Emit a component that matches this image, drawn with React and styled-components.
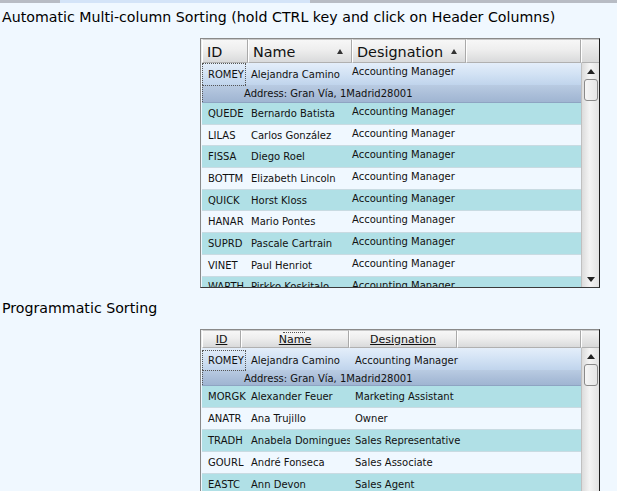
import React from "react";
import styled, { createGlobalStyle, css } from "styled-components";

const GlobalStyle = createGlobalStyle`
  body {
    margin: 0;
    background: #f0f8ff;
    font-family: "DejaVu Sans", Tahoma, sans-serif;
  }
`;

const TopStrip = styled.div`
  height: 3px;
  background: linear-gradient(
    to right,
    #b8bcc4 0,
    #b8bcc4 60px,
    #d4e4f8 60px,
    #d4e4f8 310px,
    #b8bcc4 310px
  );
`;

const Label = styled.div`
  font-size: 14.2px;
  line-height: 20px;
  color: #000;
  padding-left: 2px;
  margin-top: ${({ $top }) => $top}px;
  margin-bottom: ${({ $bottom }) => $bottom}px;
  white-space: nowrap;
`;

const GridBox = styled.div`
  margin-left: 200px;
  width: 398px;
  height: ${({ $height }) => $height}px;
  border: 1px solid #8a8a8a;
  border-right-color: #1e1e1e;
  border-bottom-color: #3a3a3a;
  background: #f0f8ff;
  display: grid;
  grid-template-columns: 1fr 18px;
  grid-template-rows: ${({ $header }) => $header}px 1fr;
  overflow: hidden;
`;

const HeaderRow = styled.div`
  display: grid;
  grid-template-columns: ${({ $cols }) => $cols};
  padding-left: 1px;
  background: #eceeef;
`;

const HeaderCell = styled.div`
  display: flex;
  align-items: center;
  justify-content: ${({ $center }) => ($center ? "center" : "space-between")};
  padding: ${({ $center }) => ($center ? "1px 0 0" : "2px 8px 0 4px")};
  background: linear-gradient(to bottom, #f7f7f7 0%, #eeeeee 45%, #d9dadb 100%);
  border-right: 1px solid #a9a9a9;
  border-left: 1px solid #ffffff;
  border-top: 1px solid #c8c8c8;
  border-bottom: 1px solid #b0b0b0;
  font-size: ${({ $large }) => ($large ? "14.4px" : "11px")};
  text-decoration: ${({ $underline }) => ($underline ? "underline" : "none")};
  color: #111;
  white-space: nowrap;
  position: relative;
`;

const FocusMark = styled.span`
  position: absolute;
  top: 1px;
  left: 50%;
  width: 22px;
  margin-left: -12px;
  border-top: 1px dotted #555;
`;

const SortArrow = styled.span`
  width: 0;
  height: 0;
  border-left: 3.5px solid transparent;
  border-right: 3.5px solid transparent;
  border-bottom: 5px solid #333;
  margin-bottom: 2px;
`;

const Corner = styled.div`
  background: linear-gradient(to bottom, #f3f3f3, #d9d9d9);
  border-top: 1px solid #c8c8c8;
  border-bottom: 1px solid #b0b0b0;
  border-left: 1px solid #fff;
`;

const Body = styled.div`
  overflow: hidden;
  padding-left: 1px;
`;

const Row = styled.div`
  display: grid;
  grid-template-columns: 44px 104px 1fr;
  height: ${({ $h }) => $h}px;
  box-sizing: border-box;
  align-items: center;
  padding-top: ${({ $shift }) => $shift || 0}px;
  border-bottom: 1px solid #c9dbe2;
  font-size: 10px;
  color: #111;
  ${({ $variant }) =>
    $variant === "alt"
      ? css`
          background: #b0e0e6;
        `
      : $variant === "selected"
      ? css`
          background: linear-gradient(to bottom, #e4eefa 0%, #d2e2f4 50%, #c0d4ec 100%);
          border-bottom: none;
        `
      : css`
          background: #f0f8ff;
        `}
`;

const Cell = styled.div`
  padding-left: ${({ $pad }) => $pad ?? 6}px;
  white-space: nowrap;
  overflow: hidden;
  align-self: ${({ $top }) => ($top ? "start" : "center")};
  padding-top: ${({ $top }) => ($top ? "3px" : "0")};
  ${({ $focus }) =>
    $focus &&
    css`
      align-self: stretch;
      display: flex;
      align-items: center;
      border: 1px dotted #555;
      border-bottom: none;
      padding-left: 5px;
    `}
`;

const AddressRow = styled.div`
  height: ${({ $height }) => $height}px;
  display: flex;
  align-items: center;
  padding-left: 42px;
  padding-top: ${({ $shift }) => $shift || 0}px;
  font-size: 10px;
  color: #111;
  background: linear-gradient(to bottom, #b9cbe2 0%, #a9bdd8 60%, #a0b5d2 100%);
  border-bottom: 1px solid #8ea4c2;
  box-sizing: border-box;
  position: relative;
`;

const AddressFocus = styled.span`
  position: absolute;
  left: 0;
  top: 0;
  bottom: 0;
  width: 44px;
  border-left: 1px dotted #555;
  border-top: 1px dotted #555;
  box-sizing: border-box;
`;

const ScrollBar = styled.div`
  display: flex;
  flex-direction: column;
  align-items: center;
  background: linear-gradient(to right, #dcdcdc, #f4f4f4 45%, #e2e2e2);
  border-left: 1px solid #c0c0c0;
`;

const ArrowBtn = styled.div`
  height: 16px;
  width: 100%;
  display: flex;
  align-items: center;
  justify-content: center;
`;

const ArrowUp = styled.span`
  border-left: 4px solid transparent;
  border-right: 4px solid transparent;
  border-bottom: 5px solid #222;
`;

const ArrowDown = styled.span`
  border-left: 4px solid transparent;
  border-right: 4px solid transparent;
  border-top: 5px solid #222;
`;

const Thumb = styled.div`
  width: 12px;
  height: 20px;
  border: 1px solid #8a8a8a;
  border-radius: 3px;
  background: linear-gradient(to right, #f6f6f6, #e6e6e6);
`;

const Spacer = styled.div`
  flex: 1;
`;

const autoRows = [
  ["QUEDE", "Bernardo Batista", "Accounting Manager"],
  ["LILAS", "Carlos González", "Accounting Manager"],
  ["FISSA", "Diego Roel", "Accounting Manager"],
  ["BOTTM", "Elizabeth Lincoln", "Accounting Manager"],
  ["QUICK", "Horst Kloss", "Accounting Manager"],
  ["HANAR", "Mario Pontes", "Accounting Manager"],
  ["SUPRD", "Pascale Cartrain", "Accounting Manager"],
  ["VINET", "Paul Henriot", "Accounting Manager"],
  ["WARTH", "Pirkko Koskitalo", "Accounting Manager"],
];

const progRows = [
  ["MORGK", "Alexander Feuer", "Marketing Assistant"],
  ["ANATR", "Ana Trujillo", "Owner"],
  ["TRADH", "Anabela Domingues", "Sales Representative"],
  ["GOURL", "André Fonseca", "Sales Associate"],
  ["EASTC", "Ann Devon", "Sales Agent"],
  ["FAMIA", "Aria Cruz", "Marketing Assistant"],
];

function Grid({ large, height, header, addressHeight, rowHeight, rows, topDesig, desigPad, shift }) {
  return (
    <GridBox $height={height} $header={header}>
      {large ? (
        <HeaderRow $cols="46px 104px 114px 1fr">
          <HeaderCell $large>ID</HeaderCell>
          <HeaderCell $large>
            Name <SortArrow />
          </HeaderCell>
          <HeaderCell $large>
            Designation <SortArrow />
          </HeaderCell>
          <HeaderCell />
        </HeaderRow>
      ) : (
        <HeaderRow $cols="39px 108px 108px 1fr">
          <HeaderCell $center $underline>ID</HeaderCell>
          <HeaderCell $center $underline>
            <FocusMark />
            Name
          </HeaderCell>
          <HeaderCell $center $underline>Designation</HeaderCell>
          <HeaderCell $center />
        </HeaderRow>
      )}
      <Corner />
      <Body>
        <Row $variant="selected" $h={22} $shift={shift}>
          <Cell $focus>ROMEY</Cell>
          <Cell $pad={5}>Alejandra Camino</Cell>
          <Cell $pad={desigPad} $top={topDesig}>Accounting Manager</Cell>
        </Row>
        <AddressRow $height={addressHeight} $shift={shift}>
          <AddressFocus />
          Address: Gran Vía, 1Madrid28001
        </AddressRow>
        {rows.map(([id, name, desig], i) => (
          <Row key={id} $h={rowHeight} $variant={i % 2 === 0 ? "alt" : "plain"}>
            <Cell>{id}</Cell>
            <Cell $pad={5}>{name}</Cell>
            <Cell $pad={desigPad} $top={topDesig}>{desig}</Cell>
          </Row>
        ))}
      </Body>
      <ScrollBar>
        <ArrowBtn>
          <ArrowUp />
        </ArrowBtn>
        <Thumb />
        <Spacer />
        <ArrowBtn>
          <ArrowDown />
        </ArrowBtn>
      </ScrollBar>
    </GridBox>
  );
}

export default function App() {
  return (
    <>
      <GlobalStyle />
      <TopStrip />
      <Label $top={4} $bottom={11}>
        Automatic Multi-column Sorting (hold CTRL key and click on Header Columns)
      </Label>
      <Grid
        large
        height={248}
        header={24}
        addressHeight={18}
        rowHeight={21.7}
        rows={autoRows}
        topDesig
        desigPad={2}
      />
      <Label $top={10} $bottom={11}>Programmatic Sorting</Label>
      <Grid
        height={200}
        header={18}
        addressHeight={16}
        rowHeight={22}
        rows={progRows}
        desigPad={5}
        shift={2}
      />
    </>
  );
}
